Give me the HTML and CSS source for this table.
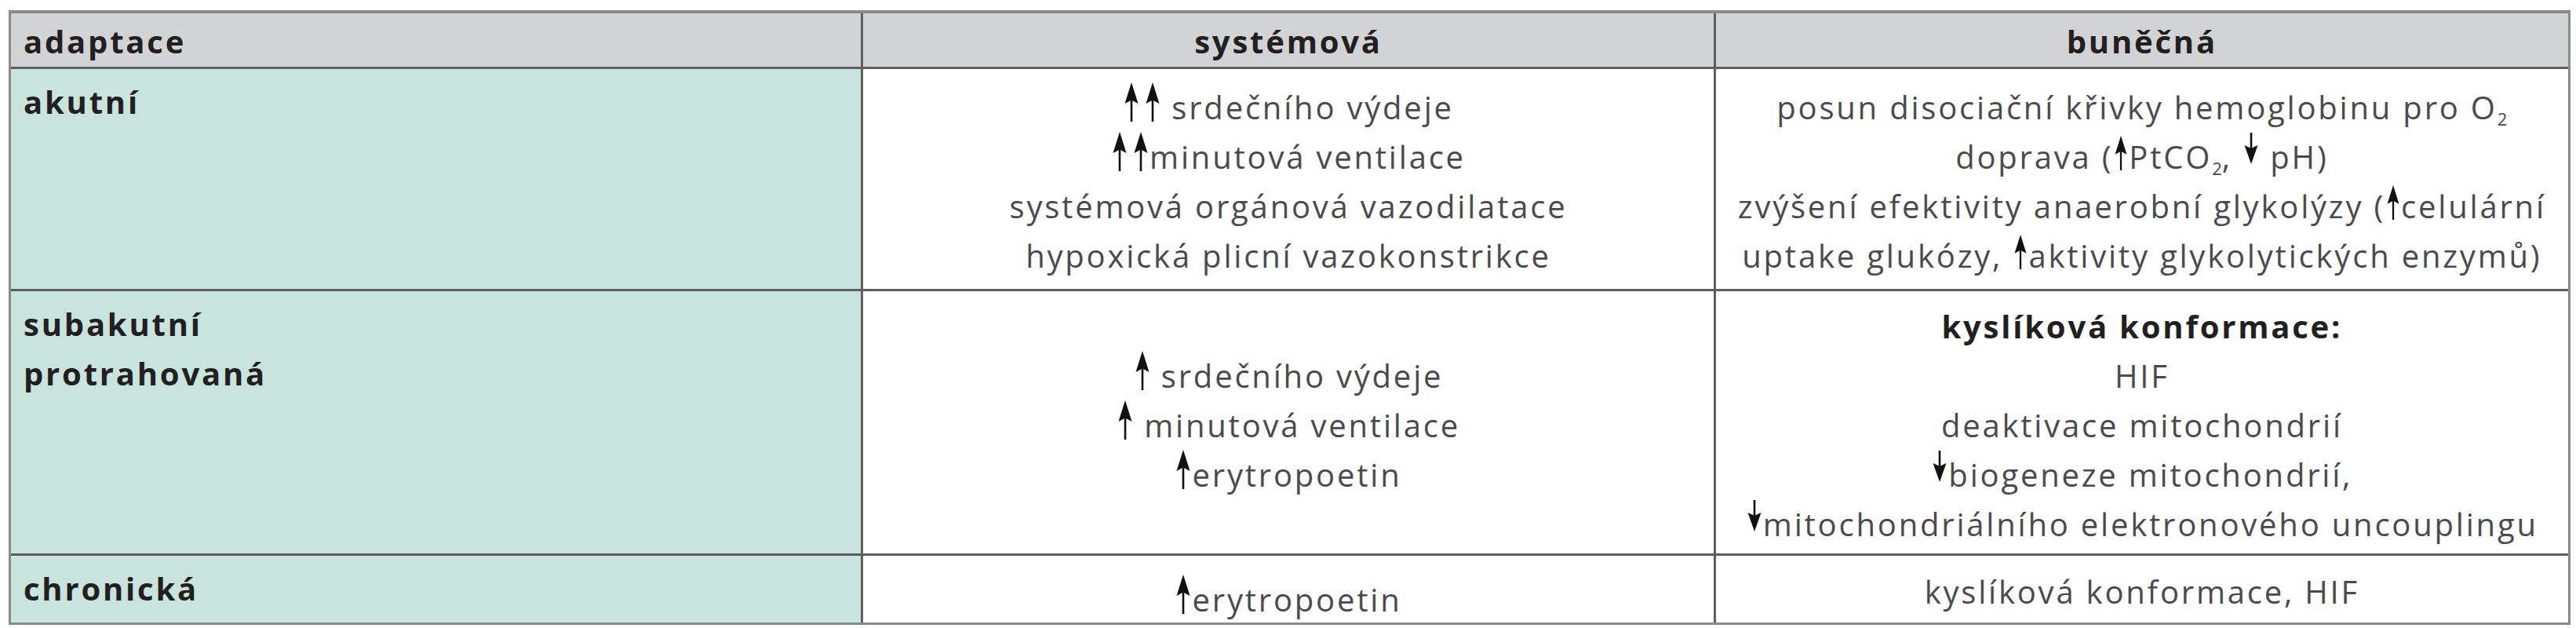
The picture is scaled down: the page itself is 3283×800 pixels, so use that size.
FILE: index.html
```html
<!DOCTYPE html>
<html lang="cs">
<head>
<meta charset="utf-8">
<title>Adaptace na hypoxii</title>
<link rel="stylesheet" href="styles.css">
</head>
<body>
<svg width="0" height="0" class="defs" aria-hidden="true">
  <defs>
    <symbol id="arrow-up" viewBox="0 0 22 50">
      <path d="M11 0 L19.5 27 L11 22.5 L2.5 27 Z"/>
      <rect x="9.7" y="19" width="2.6" height="31"/>
    </symbol>
    <symbol id="arrow-down" viewBox="0 0 22 40">
      <rect x="9.7" y="0" width="2.6" height="22"/>
      <path d="M11 40 L19.5 16 L11 20 L2.5 16 Z"/>
    </symbol>
  </defs>
</svg>
<div class="table">
  <div class="cell head first">adaptace</div>
  <div class="cell head center">systémová</div>
  <div class="cell head center last">buněčná</div>

  <div class="cell label">akutní</div>
  <div class="cell body">
    <div class="line"><svg class="up"><use href="#arrow-up"/></svg><svg class="up pair"><use href="#arrow-up"/></svg> srdečního výdeje</div>
    <div class="line"><svg class="up"><use href="#arrow-up"/></svg><svg class="up pair"><use href="#arrow-up"/></svg>minutová ventilace</div>
    <div class="line">systémová orgánová vazodilatace</div>
    <div class="line">hypoxická plicní vazokonstrikce</div>
  </div>
  <div class="cell body last">
    <div class="line">posun disociační křivky hemoglobinu pro O<sub>2</sub></div>
    <div class="line">doprava (<svg class="up small"><use href="#arrow-up"/></svg>PtCO<sub>2</sub>, <svg class="down"><use href="#arrow-down"/></svg> pH)</div>
    <div class="line">zvýšení efektivity anaerobní glykolýzy (<svg class="up small"><use href="#arrow-up"/></svg>celulární</div>
    <div class="line">uptake glukózy, <svg class="up small"><use href="#arrow-up"/></svg>aktivity glykolytických enzymů)</div>
  </div>

  <div class="cell label">subakutní<br>protrahovaná</div>
  <div class="cell body">
    <div class="line"><svg class="up"><use href="#arrow-up"/></svg> srdečního výdeje</div>
    <div class="line"><svg class="up"><use href="#arrow-up"/></svg> minutová ventilace</div>
    <div class="line"><svg class="up"><use href="#arrow-up"/></svg>erytropoetin</div>
  </div>
  <div class="cell body last">
    <div class="line strong">kyslíková konformace:</div>
    <div class="line">HIF</div>
    <div class="line">deaktivace mitochondrií</div>
    <div class="line"><svg class="down"><use href="#arrow-down"/></svg>biogeneze mitochondrií,</div>
    <div class="line"><svg class="down"><use href="#arrow-down"/></svg>mitochondriálního elektronového uncouplingu</div>
  </div>

  <div class="cell label bottom">chronická</div>
  <div class="cell body bottom clipped">
    <div class="line"><svg class="up"><use href="#arrow-up"/></svg>erytropoetin</div>
  </div>
  <div class="cell body bottom last">
    <div class="line">kyslíková konformace, HIF</div>
  </div>
</div>
</body>
</html>
```

FILE: styles.css
```css
html, body {
  margin: 0;
  padding: 0;
  background: #ffffff;
}

body {
  font-family: "Open Sans", "Noto Sans", "DejaVu Sans", sans-serif;
  font-size: 40px;
  letter-spacing: 0.07em;
  color: #4a4a4c;
}

.defs {
  position: absolute;
  width: 0;
  height: 0;
}

.table {
  margin: 13px 0 0 11px;
  width: 3265px;
  box-sizing: border-box;
  border: 3px solid #8a8a8a;
  border-top-width: 4px;
  display: grid;
  grid-template-columns: 1fr 1fr 1fr;
  grid-template-rows: 71px 283px 337px 85px;
}

.cell {
  box-sizing: border-box;
  border-right: 3px solid #5e5e5e;
  border-bottom: 3px solid #5e5e5e;
  line-height: 63px;
  min-width: 0;
}

.cell.last {
  border-right: none;
}

.cell.bottom {
  border-bottom: none;
}

.head {
  background: #d1d3d4;
  font-weight: 700;
  color: #231f20;
  padding: 4px 16px 0;
}

.head.center {
  text-align: center;
}

.label {
  background: #c9e3dd;
  font-weight: 700;
  color: #231f20;
  padding: 10px 16px 0;
}

.body {
  background: #ffffff;
  display: flex;
  flex-direction: column;
  align-items: center;
  justify-content: center;
  padding-top: 6px;
}

.body.clipped {
  justify-content: flex-start;
  padding-top: 24px;
  overflow: hidden;
}

.line {
  white-space: nowrap;
}

.line.strong {
  font-weight: 700;
  color: #231f20;
}

sub {
  font-size: 0.55em;
  line-height: 0;
  vertical-align: -0.35em;
  letter-spacing: 0;
}

svg.up {
  width: 22px;
  height: 50px;
  fill: #111111;
  vertical-align: -3px;
}

svg.up.small {
  width: 20px;
  height: 44px;
  vertical-align: -2px;
}

svg.up.pair {
  margin-left: 5px;
}

svg.down {
  width: 22px;
  height: 40px;
  fill: #111111;
  vertical-align: 6px;
}
```
